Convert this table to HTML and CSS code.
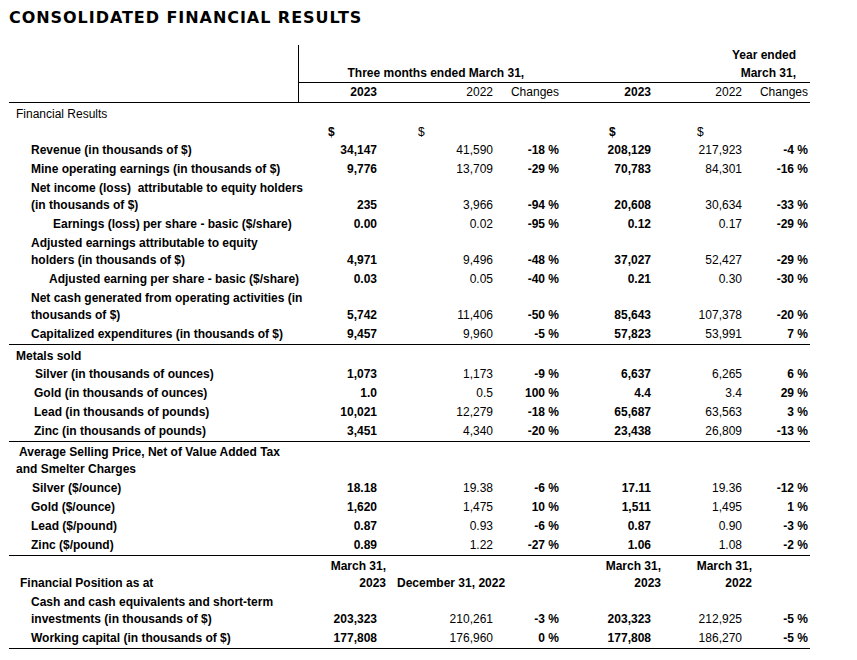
FILE: index.html
```html
<!DOCTYPE html>
<html lang="en">
<head>
<meta charset="utf-8">
<title>Consolidated Financial Results</title>
<link rel="stylesheet" href="styles.css">
</head>
<body>
<div class="page">
  <h1 class="title">CONSOLIDATED FINANCIAL RESULTS</h1>
  <table class="fin">
    <colgroup>
      <col class="c-label"><col class="c-q23"><col class="c-q22"><col class="c-qch"><col class="c-y23"><col class="c-y22"><col class="c-ych">
    </colgroup>
    <tbody>
      <tr class="hr1">
        <td class="vline"></td>
        <td colspan="4"></td>
        <td colspan="2" class="yh">Year ended</td>
      </tr>
      <tr class="hr2">
        <td class="vline"></td>
        <td colspan="3" class="qh ul">Three months ended March 31,</td>
        <td class="ul"></td>
        <td colspan="2" class="yh ul">March 31,</td>
      </tr>
      <tr class="hr3 rule">
        <td class="vline"></td>
        <td class="v1">2023</td>
        <td class="v2 r">2022</td>
        <td class="v3 r">Changes</td>
        <td class="v4">2023</td>
        <td class="v5 r">2022</td>
        <td class="v6 r">Changes</td>
      </tr>

      <tr class="sec-first">
        <td class="lbl l0 r">Financial Results</td>
        <td></td><td></td><td></td><td></td><td></td><td></td>
      </tr>
      <tr class="cur">
        <td></td>
        <td class="d1">$</td>
        <td class="d2 r">$</td>
        <td></td>
        <td class="d4">$</td>
        <td class="d5 r">$</td>
        <td></td>
      </tr>
      <tr>
        <td class="lbl l1">Revenue (in thousands of $)</td>
        <td class="v1">34,147</td><td class="v2 r">41,590</td><td class="v3">-18 %</td>
        <td class="v4">208,129</td><td class="v5 r">217,923</td><td class="v6">-4 %</td>
      </tr>
      <tr>
        <td class="lbl l1">Mine operating earnings (in thousands of $)</td>
        <td class="v1">9,776</td><td class="v2 r">13,709</td><td class="v3">-29 %</td>
        <td class="v4">70,783</td><td class="v5 r">84,301</td><td class="v6">-16 %</td>
      </tr>
      <tr>
        <td class="lbl l1">Net income (loss)&nbsp; attributable to equity holders<br>(in thousands of $)</td>
        <td class="v1">235</td><td class="v2 r">3,966</td><td class="v3">-94 %</td>
        <td class="v4">20,608</td><td class="v5 r">30,634</td><td class="v6">-33 %</td>
      </tr>
      <tr>
        <td class="lbl l2">Earnings (loss) per share - basic ($/share)</td>
        <td class="v1">0.00</td><td class="v2 r">0.02</td><td class="v3">-95 %</td>
        <td class="v4">0.12</td><td class="v5 r">0.17</td><td class="v6">-29 %</td>
      </tr>
      <tr>
        <td class="lbl l1">Adjusted earnings attributable to equity<br>holders (in thousands of $)</td>
        <td class="v1">4,971</td><td class="v2 r">9,496</td><td class="v3">-48 %</td>
        <td class="v4">37,027</td><td class="v5 r">52,427</td><td class="v6">-29 %</td>
      </tr>
      <tr>
        <td class="lbl l2b">Adjusted earning per share - basic ($/share)</td>
        <td class="v1">0.03</td><td class="v2 r">0.05</td><td class="v3">-40 %</td>
        <td class="v4">0.21</td><td class="v5 r">0.30</td><td class="v6">-30 %</td>
      </tr>
      <tr>
        <td class="lbl l1">Net cash generated from operating activities (in<br>thousands of $)</td>
        <td class="v1">5,742</td><td class="v2 r">11,406</td><td class="v3">-50 %</td>
        <td class="v4">85,643</td><td class="v5 r">107,378</td><td class="v6">-20 %</td>
      </tr>
      <tr class="rule">
        <td class="lbl l1">Capitalized expenditures (in thousands of $)</td>
        <td class="v1">9,457</td><td class="v2 r">9,960</td><td class="v3">-5 %</td>
        <td class="v4">57,823</td><td class="v5 r">53,991</td><td class="v6">7 %</td>
      </tr>

      <tr class="sec-head">
        <td class="lbl l0">Metals sold</td>
        <td></td><td></td><td></td><td></td><td></td><td></td>
      </tr>
      <tr>
        <td class="lbl l1c">Silver (in thousands of ounces)</td>
        <td class="v1">1,073</td><td class="v2 r">1,173</td><td class="v3">-9 %</td>
        <td class="v4">6,637</td><td class="v5 r">6,265</td><td class="v6">6 %</td>
      </tr>
      <tr>
        <td class="lbl l1d">Gold (in thousands of ounces)</td>
        <td class="v1">1.0</td><td class="v2 r">0.5</td><td class="v3">100 %</td>
        <td class="v4">4.4</td><td class="v5 r">3.4</td><td class="v6">29 %</td>
      </tr>
      <tr>
        <td class="lbl l1d">Lead (in thousands of pounds)</td>
        <td class="v1">10,021</td><td class="v2 r">12,279</td><td class="v3">-18 %</td>
        <td class="v4">65,687</td><td class="v5 r">63,563</td><td class="v6">3 %</td>
      </tr>
      <tr class="rule">
        <td class="lbl l1d">Zinc (in thousands of pounds)</td>
        <td class="v1">3,451</td><td class="v2 r">4,340</td><td class="v3">-20 %</td>
        <td class="v4">23,438</td><td class="v5 r">26,809</td><td class="v6">-13 %</td>
      </tr>

      <tr class="sec-two">
        <td class="lbl l0 hang">Average Selling Price, Net of Value Added Tax<br>and Smelter Charges</td>
        <td></td><td></td><td></td><td></td><td></td><td></td>
      </tr>
      <tr>
        <td class="lbl l1e">Silver ($/ounce)</td>
        <td class="v1">18.18</td><td class="v2 r">19.38</td><td class="v3">-6 %</td>
        <td class="v4">17.11</td><td class="v5 r">19.36</td><td class="v6">-12 %</td>
      </tr>
      <tr>
        <td class="lbl l1">Gold ($/ounce)</td>
        <td class="v1">1,620</td><td class="v2 r">1,475</td><td class="v3">10 %</td>
        <td class="v4">1,511</td><td class="v5 r">1,495</td><td class="v6">1 %</td>
      </tr>
      <tr>
        <td class="lbl l1">Lead ($/pound)</td>
        <td class="v1">0.87</td><td class="v2 r">0.93</td><td class="v3">-6 %</td>
        <td class="v4">0.87</td><td class="v5 r">0.90</td><td class="v6">-3 %</td>
      </tr>
      <tr class="rule">
        <td class="lbl l1">Zinc ($/pound)</td>
        <td class="v1">0.89</td><td class="v2 r">1.22</td><td class="v3">-27 %</td>
        <td class="v4">1.06</td><td class="v5 r">1.08</td><td class="v6">-2 %</td>
      </tr>

      <tr class="sec-two">
        <td class="lbl lfp">Financial Position as at</td>
        <td class="fp">March 31,<br>2023</td>
        <td colspan="2" class="fpd">December 31, 2022</td>
        <td class="fp">March 31,<br>2023</td>
        <td class="fp">March 31,<br>2022</td>
        <td></td>
      </tr>
      <tr>
        <td class="lbl l1">Cash and cash equivalents and short-term<br>investments (in thousands of $)</td>
        <td class="v1">203,323</td><td class="v2 r">210,261</td><td class="v3">-3 %</td>
        <td class="v4">203,323</td><td class="v5 r">212,925</td><td class="v6">-5 %</td>
      </tr>
      <tr class="rule">
        <td class="lbl l1">Working capital (in thousands of $)</td>
        <td class="v1">177,808</td><td class="v2 r">176,960</td><td class="v3">0 %</td>
        <td class="v4">177,808</td><td class="v5 r">186,270</td><td class="v6">-5 %</td>
      </tr>
    </tbody>
  </table>
</div>
</body>
</html>
```

FILE: styles.css
```css
html, body {
  margin: 0;
  padding: 0;
  background: #ffffff;
  color: #000000;
}

.page {
  padding: 8px 0 0 9px;
}

.title {
  margin: 0 0 17px 0;
  font-family: "DejaVu Sans", Verdana, sans-serif;
  font-weight: bold;
  font-size: 16px;
  line-height: 20px;
  letter-spacing: 0.95px;
  color: #000000;
}

.fin {
  border-collapse: collapse;
  table-layout: fixed;
  width: 801px;
  font-family: "Liberation Sans", Arial, sans-serif;
  font-size: 12px;
  line-height: 17px;
  font-weight: bold;
  color: #000000;
}

.c-label { width: 289px; }
.c-q23 { width: 90px; }
.c-q22 { width: 107px; }
.c-qch { width: 66px; }
.c-y23 { width: 102px; }
.c-y22 { width: 91px; }
.c-ych { width: 56px; }

.fin td {
  padding: 1px 0;
  white-space: nowrap;
  vertical-align: bottom;
  text-align: right;
}

.fin td.r { font-weight: normal; }

/* header */
.hr1 td { padding: 2px 0 0 0; }
.hr2 td { padding: 1px 0 0 0; }
.hr3 td { padding: 1px 0 1px 0; }
.fin td.vline { border-right: 1px solid #000; }
.fin td.ul { border-bottom: 1px solid #000; }
.fin td.qh { text-align: left; padding-left: 49px; }
.fin td.yh { padding-right: 14px; }

.rule td { border-bottom: 1px solid #000; }

/* value columns */
.fin td.v1 { padding-right: 11px; }
.fin td.v2 { padding-right: 2px; }
.fin td.v3 { padding-right: 2px; }
.fin td.v4 { padding-right: 12px; }
.fin td.v5 { padding-right: 12px; }
.fin td.v6 { padding-right: 2px; }

/* currency row */
.cur td { padding: 0; text-align: left; }
.fin td.d1 { padding-left: 30px; }
.fin td.d2 { padding-left: 30px; }
.fin td.d4 { padding-left: 48px; }
.fin td.d5 { padding-left: 34px; }

/* labels */
.fin td.lbl { text-align: left; }
.fin td.l0 { padding-left: 7px; }
.fin td.l1 { padding-left: 22px; }
.fin td.l1c { padding-left: 26px; }
.fin td.l1d { padding-left: 25px; }
.fin td.l1e { padding-left: 23px; }
.fin td.l2 { padding-left: 44px; }
.fin td.l2b { padding-left: 40px; }
.fin td.lfp { padding-left: 11px; }
.fin td.hang { text-indent: 3px; }

.sec-first td { padding: 3px 0 1px 0; }
.sec-head td { padding: 3px 0 0 0; }
.sec-two td { padding: 2px 0 1px 0; }

/* financial position header */
.fin td.fp { padding-right: 2px; }
.fin td.fpd { text-align: left; padding-left: 9px; }
```
